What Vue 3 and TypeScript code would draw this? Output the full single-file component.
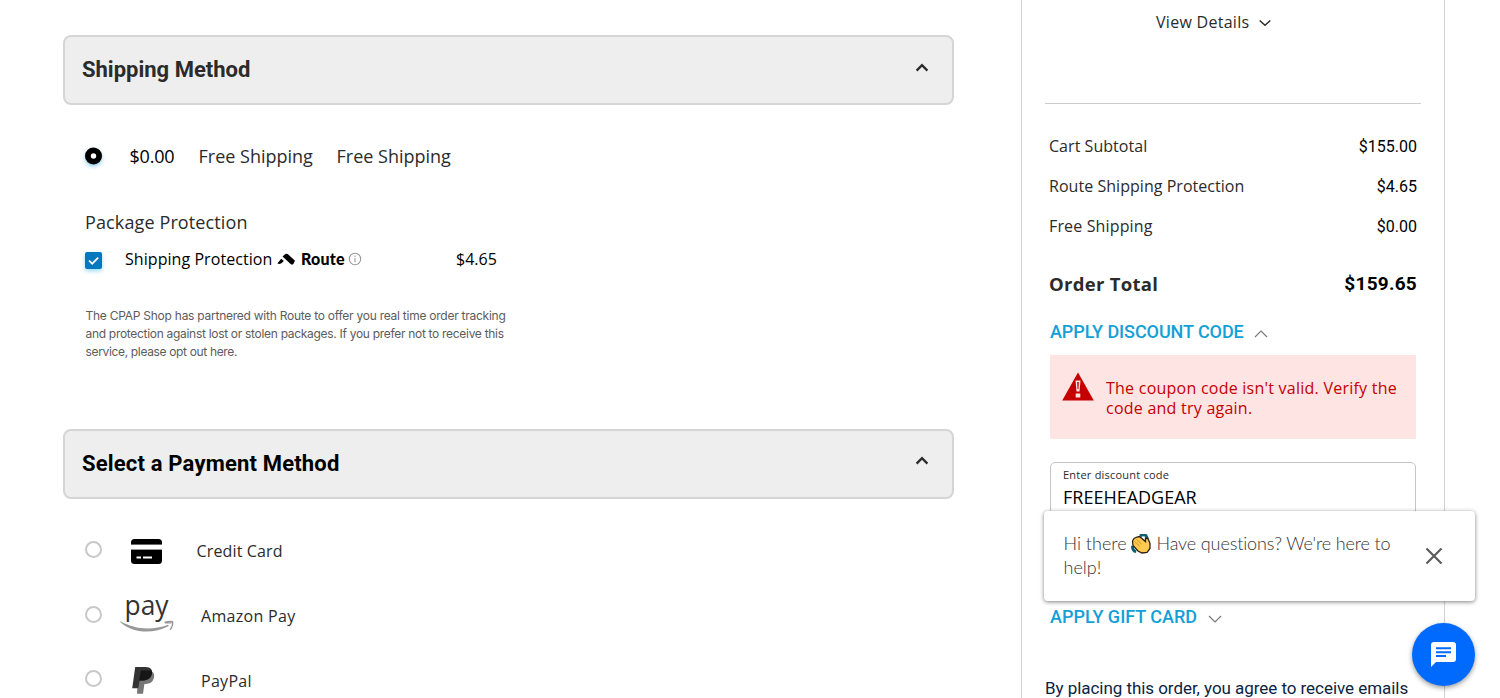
<script setup lang="ts">
interface Line { label: string; price: string; key: string }
const totals: Line[] = [
  { label: 'Cart Subtotal', price: '$155.00', key: 'cart' },
  { label: 'Route Shipping Protection', price: '$4.65', key: 'route' },
  { label: 'Free Shipping', price: '$0.00', key: 'free' },
]
const note: string[] = [
  'The CPAP Shop has partnered with Route to offer you real time order tracking',
  'and protection against lost or stolen packages. If you prefer not to receive this',
  'service, please opt out here.',
]
</script>

<template>
  <div class="page">
    <main class="checkout">
      <header class="section-head">
        <h2 class="dark"><span>Shipping Method</span></h2>
        <svg class="caret" width="16" height="12" viewBox="0 0 16 12"><path d="M2.600 8.600 8 3.200l5.400 5.400" /></svg>
      </header>

      <div class="rate">
        <svg class="radio-on" width="22" height="22" viewBox="0 0 22 22"><circle cx="10.500" cy="11" r="5.600" /></svg>
        <span class="rate-price">$0.00</span>
        <span class="rate-name">Free Shipping</span>
        <span class="rate-method">Free Shipping</span>
      </div>

      <div class="package-title"><span>Package Protection</span></div>
      <div class="protect">
        <span class="checkbox"><svg width="17" height="17" viewBox="0 0 17 17"><path d="m4 8.500 3.200 3.200 6-6" /></svg></span>
        <span class="protect-name">Shipping Protection</span>
        <svg class="route-mark" width="19" height="13" viewBox="0 0 19 13">
          <path d="M5.600 3.400 8 1.200Q9.500.2 11 1.300l7 6.500-1.600 3.200q-1 1.200-2.800 0z" />
          <path d="M.4 10.600 4.200 5.700 6.900 8l-2.500 2.300q-2 1.300-4 .3z" />
        </svg>
        <span class="route-name">Route</span>
        <svg class="info" width="14" height="14" viewBox="0 0 14 14"><circle cx="7" cy="7" r="5.700" /><path d="M7 6.200v4M7 3.500v1.400" /></svg>
        <span class="protect-price">$4.65</span>
      </div>
      <p class="note"><span v-for="(line, i) in note" :key="i" :class="'n' + i">{{ line }}</span></p>

      <header class="section-head">
        <h2 class="pay-title"><span>Select a Payment Method</span></h2>
        <svg class="caret pay-caret" width="16" height="12" viewBox="0 0 16 12"><path d="M2.600 8.600 8 3.200l5.400 5.400" /></svg>
      </header>

      <div class="methods">
        <div class="method">
          <i class="radio"></i>
          <span class="logo">
            <svg width="54" height="40" viewBox="0 0 54 40">
              <rect x="11" y="8" width="31" height="25" rx="3.500" />
              <path d="M11 13.600h31v5H11z" fill="#fff" />
              <path d="M16.500 26.500H21M23 26.500h9" stroke="#fff" stroke-width="1.800" />
            </svg>
          </span>
          <span class="method-name credit">Credit Card</span>
        </div>
        <div class="method">
          <i class="radio"></i>
          <span class="logo">
            <svg width="54" height="40" viewBox="0 0 54 40">
              <text x="4.500" y="18.700" class="pay-word" textLength="44" lengthAdjust="spacingAndGlyphs">pay</text>
              <path d="M.5 25.200C14 33.200 32 34.800 48 28.700l.8 1.200C32 38.800 12 37 .2 26z" fill="#999" />
              <path d="M44.500 26.700q4-2 8-1 .8 4.500-2.500 8.200M45 26.700l6.500.2" fill="none" stroke="#999" stroke-width="1.400" />
            </svg>
          </span>
          <span class="method-name amazon">Amazon Pay</span>
        </div>
        <div class="method">
          <i class="radio"></i>
          <span class="logo">
            <svg width="54" height="40" viewBox="0 0 54 40">
              <path d="M18.500 10.500H30c4.500 1.500 5 5.500 3.200 9.200-1.800 3.500-5 4.300-8.800 4.300L23 33.700h-6z" fill="#777" />
              <path d="M15.200 7h10.500c5.200 0 7.300 3.200 6 7.500-1.500 4.800-5 6-10 6h-2l-1.500 7.700h-6z" fill="#333" />
              <path d="M21 10.500h10.800q.5 2-.1 4c-1.500 4.800-5 6-10 6h-2.600z" fill="#161616" />
            </svg>
          </span>
          <span class="method-name paypal">PayPal</span>
        </div>
      </div>
    </main>

    <aside class="summary">
      <div class="details"><span>View Details</span><svg width="14" height="10" viewBox="0 0 14 10"><path d="m1.700 2.500 5.300 4.800 5.300-4.800" /></svg></div>
      <div class="rule"></div>
      <div v-for="t in totals" :key="t.key" class="total-row">
        <span :class="t.key">{{ t.label }}</span><span class="amount">{{ t.price }}</span>
      </div>
      <div class="order-total"><span class="ot-label">Order Total</span><span class="ot-amount">$159.65</span></div>
      <div class="toggle discount"><span>APPLY DISCOUNT CODE</span><svg width="14" height="10" viewBox="0 0 14 10"><path d="m1 8 6-6 6 6" /></svg></div>
      <div class="error">
        <svg width="32" height="29" viewBox="0 0 32 29"><path d="M16 .5 31.800 28.500H.2z" fill="#c40000" /><path d="M13.500 8.500h5l-1 11h-3zM13.700 21.500h4.600v4h-4.600z" fill="#ffe4e4" /><path d="M15.200 10h1.600l-.3 7h-1z" fill="#c40000" /></svg>
        <p><span class="e0">The coupon code isn't valid. Verify the</span><span class="e1">code and try again.</span></p>
      </div>
      <div class="field"><label>Enter discount code</label><div class="value"><span>FREEHEADGEAR</span></div></div>
      <div class="toggle gift"><span>APPLY GIFT CARD</span><svg width="14" height="10" viewBox="0 0 14 10"><path d="m1 2 6 6 6-6" /></svg></div>
      <p class="agree"><span>By placing this order, you agree to receive emails</span></p>
    </aside>

    <div class="chat-pop">
      <p>
        <span class="h0">Hi there</span>
        <svg class="wave" width="20" height="20" viewBox="0 0 20 20">
          <path d="M9 2q3-2 6-.5l1.500 3.500M1.500 12q-.5 4.500 3.500 6" fill="none" stroke="#0c5f73" stroke-width="2.800" />
          <path d="M1.500 7 3 4.500 6 3l2.500-.5 6 5V4l2.500.5 2 5v5l-3 4-5 .5-4-2-5-5.500z" fill="#ffc84f" stroke="#2b2112" stroke-width="1.300" />
          <path d="m3.500 7.500 5 4.500M5.500 5.500l5 4.500" stroke="#d99227" />
        </svg>
        <span class="h1">Have questions? We're here to</span>
        <span class="h2">help!</span>
      </p>
      <svg class="close" width="18" height="18" viewBox="0 0 18 18"><path d="m1.500 1.500 15 15m0-15-15 15" /></svg>
    </div>
    <div class="chat-btn">
      <svg width="25" height="25" viewBox="0 0 25 25"><path d="M3 0h19q3 0 3 3v14q0 3-3 3H5l-5 5V3q0-3 3-3z" fill="#fff" /><path d="M5 6.200h15M5 10.200h15M5 14h10" stroke="#006aff" stroke-width="1.900" /></svg>
    </div>
  </div>
</template>

<style>
html, body { margin: 0; overflow: hidden; background: #fff; }
</style>

<style scoped>
.page { position: relative; display: flex; width: 1500px; height: 698px; overflow: hidden; box-sizing: border-box; padding-left: 63px; background: #fff; font-family: "Open Sans", "Noto Sans", sans-serif; color: #2b2b2b; }
.page * { box-sizing: border-box; }
.page span { white-space: nowrap; }
p, h2 { margin: 0; }
.checkout { width: 891px; padding-top: 35px; }
.section-head { height: 70px; border: 2px solid #d5d5d5; border-radius: 8px; background: #eee; display: flex; align-items: center; justify-content: space-between; padding: 0 22px 0 17px; }
h2 { font: 700 22px/30px Roboto, sans-serif; color: #000; }
h2.dark { color: #2b2b2b; }
.pay-title { letter-spacing: .18px; }
.caret { margin-bottom: 5px; fill: none; stroke: #2b2b2b; stroke-width: 2.300; }
.pay-caret { margin-bottom: 7px; }
.rate { height: 40px; margin-top: 31px; padding-left: 20px; display: flex; align-items: center; font-size: 18px; }
.radio-on { margin-right: 24.500px; overflow: visible; fill: #fff; stroke: #000; stroke-width: 5.800; filter: drop-shadow(0 2px 2px rgba(0, 140, 210, .45)); }
.rate-price { width: 69px; color: #000; letter-spacing: -.2px; }
.rate-name { width: 138px; }
.package-title { height: 30px; margin-top: 31px; padding-left: 22px; font-size: 18px; line-height: 30px; letter-spacing: .12px; }
.protect { height: 30px; margin-top: 7px; padding-left: 22px; display: flex; align-items: center; font-size: 16px; color: #000; }
.checkbox { width: 17px; height: 17px; margin: 2px 23px 0 0; border-radius: 2px; background: #0478be; box-shadow: 0 2px 4px rgba(0, 160, 230, .4); }
.checkbox svg { display: block; fill: none; stroke: #fff; stroke-width: 1.700; }
.protect-name { width: 152px; letter-spacing: .06px; }
.route-mark { margin-right: 5px; }
.route-name { width: 47px; font: 900 16px/20px Lato, sans-serif; letter-spacing: .2px; }
.info { fill: none; stroke: #999; stroke-width: 1.100; }
.protect-price { margin-left: 94px; }
.note { margin: 33px 0 68px 22.500px; font: 12px/18px Inter, sans-serif; color: #5c5c5c; }
.note span { display: block; }
.n0 { letter-spacing: -.25px; }
.n1 { letter-spacing: -.3px; }
.n2 { letter-spacing: -.34px; }
.methods { padding-top: 20px; }
.method { height: 64.500px; padding-left: 22px; display: flex; align-items: center; font-size: 16px; }
.radio { width: 17px; height: 17px; margin: 0 18px 3px 0; border: 2px solid #c8c8c8; border-radius: 50%; background: #fff; }
.logo { width: 77px; height: 40px; }
.logo svg { display: block; overflow: visible; }
.method-name { padding-top: 1px; letter-spacing: .3px; }
.credit { margin-left: -.5px; padding-top: 0; letter-spacing: .15px; }
.amazon, .paypal { margin-left: 4px; }
.pay-word { font: 500 27px "Open Sans", sans-serif; fill: #333; }
.summary { width: 424px; height: 698px; margin-left: 67px; padding: 0 27px; border-left: 1px solid #d3d3d3; border-right: 1px solid #d3d3d3; flex: none; }
.details { height: 43px; padding-left: 107px; display: flex; align-items: center; gap: 9px; font-size: 16px; letter-spacing: .28px; }
.details svg { margin-top: 3px; fill: none; stroke: #2b2b2b; stroke-width: 1.500; }
.rule { height: 1px; margin: 60px -4px 22px -4px; background: #ccc; }
.total-row { height: 40px; display: flex; align-items: center; justify-content: space-between; font-size: 16px; letter-spacing: .04px; }
.free { letter-spacing: .15px; }
.amount { font-family: Roboto, sans-serif; color: #000; letter-spacing: 0; }
.order-total { height: 34px; margin-top: 20px; display: flex; align-items: center; justify-content: space-between; font-size: 18.500px; font-weight: 700; letter-spacing: .28px; }
.ot-amount { font-family: Roboto, sans-serif; font-size: 19px; color: #000; letter-spacing: .25px; }
.toggle { display: flex; align-items: center; gap: 10px; margin-left: 1px; height: 24px; font: 500 18px/24px Roboto, sans-serif; color: #12a0d7; }
.toggle svg { margin-top: 4px; fill: none; stroke: #777; stroke-width: 1.100; }
.discount { margin-top: 20px; letter-spacing: -.08px; }
.gift svg { margin-left: 1px; }
.error { width: 366px; height: 84px; margin: 11px 0 23px 1px; padding: 17px 0 0 12px; display: flex; gap: 12px; background: #ffe4e4; color: #c40000; font-size: 16px; line-height: 20px; letter-spacing: .24px; }
.error p { padding-top: 6px; }
.error p span { display: block; }
.field { width: 366px; height: 70px; margin-left: 1px; padding: 4px 12px; border: 1px solid #c5c5c5; border-radius: 5px; }
.field label { display: block; font-size: 11px; font-weight: 500; line-height: 16px; letter-spacing: .22px; white-space: nowrap; }
.value { color: #000; font-size: 18px; line-height: 28px; }
.gift { margin-top: 73px; }
.agree { margin: 47px 0 0 -4px; font: 17px/24px Roboto, sans-serif; letter-spacing: -.05px; color: #0b2442; }
.chat-pop { position: absolute; left: 1043.500px; top: 511px; width: 431.500px; height: 90px; padding: 20px 32.500px 0 20px; border-radius: 4px; background: #fff; box-shadow: 0 1px 4px rgba(0, 0, 0, .5); display: flex; justify-content: space-between; font: 300 18px/24px Lato, sans-serif; color: #333; }
.chat-pop p { width: 340px; display: flex; flex-wrap: wrap; align-content: flex-start; }
.h0 { width: 67px; }
.wave { margin: 3px 6px 0 0; }
.h1 { letter-spacing: -.12px; }
.h2 { width: 100%; }
.close { margin-top: 15.500px; fill: none; stroke: #5c5c5c; stroke-width: 2.200; flex: none; }
.chat-btn { position: absolute; left: 1412px; top: 623px; width: 63px; height: 63px; border-radius: 50%; background: #006aff; box-shadow: 0 2px 5px rgba(0, 0, 0, .4); display: flex; align-items: center; justify-content: center; }
</style>
